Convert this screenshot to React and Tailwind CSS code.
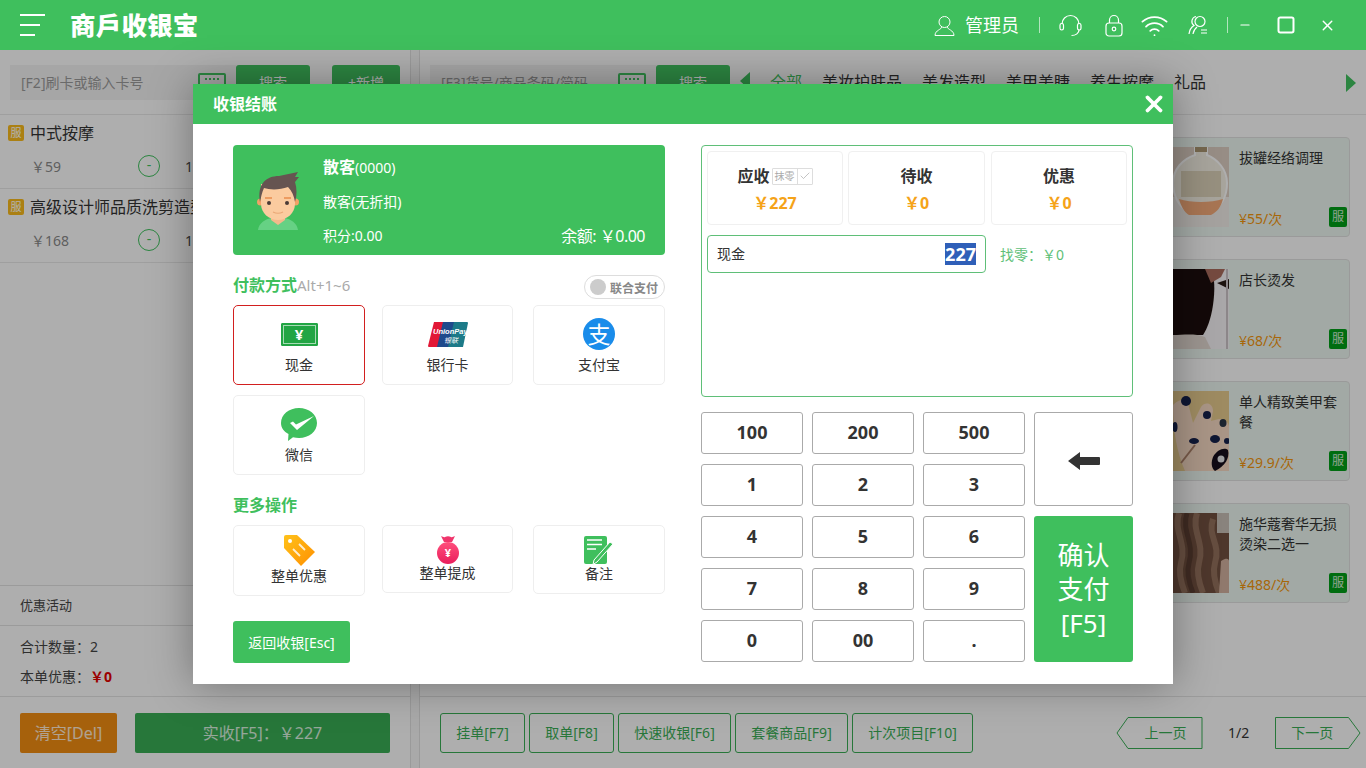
import { Minus, Square, X, Wifi, Check } from 'lucide-react'

const BRAND = 'bg-[#3fbf5d]'

const TABS = ['美妆护肤品', '美发造型', '美甲美睫', '养生按摩', '礼品']
const ORDER_ITEMS = [
  { name: '中式按摩', price: '￥59' },
  { name: '高级设计师品质洗剪造型', price: '￥168' },
]
const GOODS = [
  { name: '拔罐经络调理', price: '¥55/次', photo: 'jar' },
  { name: '店长烫发', price: '¥68/次', photo: 'hair' },
  { name: '单人精致美甲套餐', price: '¥29.9/次', photo: 'nails' },
  { name: '施华蔻奢华无损烫染二选一', price: '¥488/次', photo: 'curls' },
]
const ACTIONS = [
  { label: '挂单[F7]', width: 'w-[85px]' },
  { label: '取单[F8]', width: 'w-[85px]' },
  { label: '快速收银[F6]', width: 'w-[113px]' },
  { label: '套餐商品[F9]', width: 'w-[113px]' },
  { label: '计次项目[F10]', width: 'w-[121px]' },
]
const STATS = [
  { label: '待收', value: '￥0' },
  { label: '优惠', value: '￥0' },
]
const KEYS = ['1', '2', '3', '4', '5', '6', '7', '8', '9', '0', '00', '.']

// photos on the goods cards, only the right part shows beside the dialog
function Photo({ kind }) {
  const blur = `soft-${kind}`
  return (
    <svg width="100" height="80" viewBox="0 0 100 80" className="shrink-0">
      <defs><filter id={blur}><feGaussianBlur stdDeviation="0.7" /></filter></defs>
      <g filter={`url(#${blur})`}>
        {kind === 'jar' && (
          <>
            <rect width="100" height="80" fill="#d8cabf" />
            <rect x="44" y="50" width="56" height="30" fill="#ece9e4" />
            <path d="M66 0h12v8c10 4 20 14 20 28 0 14-6 24-16 28H58c-8-5-14-15-14-28 0-14 10-24 22-28z" fill="#f0ebe0" stroke="#fafafa" strokeWidth="2" />
            <path d="M52 24h40v26H52z" fill="#d9cfb6" />
            <path d="M50 52c12 4 32 4 44 0-2 8-6 13-12 16H60c-5-3-8-9-10-16z" fill="#f1a878" />
            <rect x="66" y="0" width="12" height="5" fill="#a8946f" />
          </>
        )}
        {kind === 'hair' && (
          <>
            <rect width="100" height="80" fill="#f3eff2" />
            <path d="M44 0h38c4 8 4 22 2 36-2 14-6 24-10 30H44z" fill="#1b0f0c" />
            <path d="M44 66c10 0 22-2 32 2l6 12H44z" fill="#e0d6ce" />
            <path d="M76 0h20l-4 8-10 6z" fill="#a86a5c" />
            <path d="M88 14l12-4v10z" fill="#2c1a18" />
            <rect x="97" y="0" width="2" height="80" fill="#c9c1c5" />
          </>
        )}
        {kind === 'nails' && (
          <>
            <rect width="100" height="80" fill="#e3c88c" />
            <path d="M44 14c8-8 14-6 16 2l4 16 8-16c4-6 12-4 12 4l-2 10 8-2c6 0 10 4 10 8v44H56C48 62 44 40 44 14z" fill="#f3d6c0" />
            <ellipse cx="57" cy="10" rx="5" ry="5" fill="#17204a" />
            <ellipse cx="78" cy="24" rx="4" ry="4" fill="#17204a" />
            <ellipse cx="94" cy="32" rx="3.500" ry="4" fill="#2a3644" />
            <ellipse cx="65" cy="50" rx="5" ry="3" fill="#17204a" />
            <ellipse cx="86" cy="48" rx="5" ry="4" fill="#17204a" />
            <ellipse cx="98" cy="50" rx="3" ry="3" fill="#17204a" />
            <ellipse cx="46" cy="36" rx="2.500" ry="5" fill="#17204a" />
            <path d="M84 66c4-8 12-10 15-7 2 8-3 16-13 21-4-3-4-9-2-14z" fill="#120f1a" />
            <circle cx="92" cy="68" r="3.500" fill="#e2e2e6" />
            <path d="M52 72l14-18" stroke="#a97f68" strokeWidth="2" />
          </>
        )}
        {kind === 'curls' && (
          <>
            <rect width="100" height="80" fill="#70503f" />
            <rect x="88" y="0" width="12" height="20" fill="#c4bcb4" />
            <path d="M50 0c-6 18 8 30 2 50-3 10 0 20 4 30M68 0c-6 18 8 30 2 50-3 10 0 20 4 30M84 6c-6 18 8 24 2 44-3 10 0 20 4 30" stroke="#93705c" strokeWidth="6" fill="none" />
            <path d="M58 0c-6 18 8 30 2 50-3 10 0 20 4 30" stroke="#5a3d30" strokeWidth="5" fill="none" />
            <path d="M92 48c6-4 8-2 8 0v32H90z" fill="#cfae9c" />
          </>
        )}
      </g>
    </svg>
  )
}

function KeyboardIcon() {
  return (
    <div className="absolute right-[10px] top-[8px] flex h-[19px] w-[28px] items-start justify-center gap-[2px] rounded-[2px] border-2 border-[#3fbf5d] pt-[3px]">
      <i className="h-[2px] w-[2px] bg-[#3fbf5d]" />
      <i className="h-[2px] w-[2px] bg-[#3fbf5d]" />
      <i className="h-[2px] w-[2px] bg-[#3fbf5d]" />
      <i className="h-[2px] w-[2px] bg-[#3fbf5d]" />
    </div>
  )
}

function Header() {
  return (
    <header className={`flex h-[50px] items-center text-white ${BRAND}`}>
      <div className="ml-[20px] flex w-[25px] flex-col gap-[8px]">
        <i className="h-[2px] w-[25px] bg-white" />
        <i className="h-[2px] w-[20px] bg-white" />
        <i className="h-[2px] w-[15px] bg-white" />
      </div>
      <div className="ml-[25px] text-[25.500px] font-black leading-[30px] tracking-[0.2px]">商戶收银宝</div>
      <div className="ml-auto flex items-center">
        <svg width="21" height="21" viewBox="0 0 21 21" fill="none" stroke="white" strokeWidth="1">
          <circle cx="10.500" cy="7" r="5.500" />
          <path d="M7.500 12c.5 2.500-6.500 3-6.500 8.500h19c0-5.500-7-6-6.500-8.500" />
        </svg>
        <span className="ml-[10px] text-[18px] leading-[26px]">管理员</span>
        <i className="ml-[20px] h-[16px] w-px bg-white/60" />
        <svg width="23" height="23" viewBox="0 0 23 23" fill="none" stroke="white" strokeWidth="1.200" className="ml-[19px]">
          <path d="M3 10a8.500 8.500 0 0 1 17 0" />
          <rect x="1" y="9.500" width="3.500" height="6.500" rx="1.700" />
          <rect x="18.500" y="9.500" width="3.500" height="6.500" rx="1.700" />
          <path d="M20 16c0 3-3 5.500-7.500 5.500" />
        </svg>
        <svg width="18" height="23" viewBox="0 0 18 23" fill="none" stroke="white" strokeWidth="1.200" className="ml-[23px]">
          <rect x="1" y="9" width="16" height="13" rx="3" />
          <path d="M4.500 9V6a4.500 4.500 0 0 1 9 0v3" />
          <circle cx="9" cy="15" r="1.800" />
        </svg>
        <Wifi size={29} strokeWidth={1.500} className="ml-[17px]" />
        <svg width="21" height="21" viewBox="0 0 21 21" fill="none" stroke="white" strokeWidth="1.200" className="ml-[19px]">
          <circle cx="12" cy="6.500" r="5" />
          <path d="M8 1.500a5 5 0 0 0-2 9C3.500 12 1.500 15 1 19" />
          <path d="M9 12c-2 1.500-3.500 4-4 7" />
          <path d="M13 15h6M13 18h6" />
        </svg>
        <i className="ml-[18px] h-[16px] w-px bg-white/60" />
        <Minus size={14} strokeWidth={2} className="ml-[10px]" />
        <Square size={20} strokeWidth={2} absoluteStrokeWidth className="ml-[24px]" />
        <X size={17} strokeWidth={2} className="ml-[23px] mr-[30px]" />
      </div>
    </header>
  )
}

// the cashier page that sits dimmed behind the dialog
function LeftPanel() {
  return (
    <aside className="flex w-[411px] shrink-0 flex-col border-r border-[#ddd] bg-[#fafafa]">
      <div className="flex h-[65px] gap-[22px] border-b border-[#e4e4e4] pl-[10px] pt-[15px]">
        <div className="flex">
          <div className="relative h-[35px] w-[226px] bg-[#eee] pl-[11px] text-[14px] leading-[35px] text-[#999]">
            [F2]刷卡或输入卡号
            <KeyboardIcon />
          </div>
          <button className="h-[35px] w-[74px] rounded-[3px] bg-[#3fbf5d] text-[14px] text-white">搜索</button>
        </div>
        <button className="h-[35px] w-[68px] rounded-[3px] bg-[#3fbf5d] text-[14px] text-white">+新增</button>
      </div>
      {ORDER_ITEMS.map(item => (
        <div key={item.name} className="h-[74px] border-b border-[#e4e4e4] pl-[8px] pt-[10px]">
          <div className="flex h-[16px] items-center whitespace-nowrap">
            <span className="h-[16px] w-[16px] rounded-[2px] bg-[#f5b81c] text-center text-[11px] leading-[16px] text-white">服</span>
            <span className="ml-[6px] text-[16px] leading-[16px] text-[#333]">{item.name}</span>
          </div>
          <div className="mt-[14px] flex h-[22px] items-center text-[14px] text-[#888]">
            <span className="ml-[23px] w-[107px]">{item.price}</span>
            <span className="h-[22px] w-[22px] rounded-full border border-[#3fbf5d] text-center leading-[18px] text-[#3fbf5d]">-</span>
            <span className="ml-[25px] text-[#444]">1</span>
          </div>
        </div>
      ))}
      <div className="mt-auto flex h-[41px] items-center border-y border-[#dedede] pl-[20px] text-[13px] text-[#444]">优惠活动</div>
      <div className="flex h-[71px] flex-col gap-[10px] border-b border-[#e0e0e0] pl-[20px] pt-[11px] text-[14px] leading-[20px] text-[#444]">
        <div>合计数量：2</div>
        <div>本单优惠：<b className="text-[#e00000]">￥0</b></div>
      </div>
      <div className="flex h-[71px] gap-[18px] pl-[20px] pt-[16px]">
        <button className="h-[40px] w-[97px] rounded-[2px] bg-[#ee8c12] text-[16px] text-white/80">清空[Del]</button>
        <button className="h-[40px] w-[255px] rounded-[2px] bg-[#38ab54] text-[16px] text-white/80">实收[F5]：￥227</button>
      </div>
    </aside>
  )
}

function RightPanel() {
  return (
    <main className="ml-[8px] flex min-w-0 flex-1 flex-col border-l border-[#ddd] bg-[#fafafa]">
      <div className="flex h-[65px] border-b border-[#e4e4e4] pl-[10px] pt-[15px]">
        <div className="relative h-[35px] w-[226px] bg-[#eee] pl-[11px] text-[14px] leading-[35px] text-[#999]">
          [F3]货号/商品条码/简码
          <KeyboardIcon />
        </div>
        <button className="h-[35px] w-[74px] rounded-[3px] bg-[#3fbf5d] text-[14px] text-white">搜索</button>
        <svg width="10" height="18" viewBox="0 0 10 18" className="ml-[10px] mt-[7px]"><path d="M10 0v18L0 9z" fill="#3fbf5d" /></svg>
        <div className="ml-[20px] flex gap-[20px] text-[16px] leading-[35px] text-[#333]">
          <span className="text-[#3fbf5d]">全部</span>
          {TABS.map(t => <span key={t}>{t}</span>)}
        </div>
        <svg width="10" height="18" viewBox="0 0 10 18" className="ml-auto mr-[10px] mt-[9px]"><path d="M0 0v18l10-9z" fill="#3fbf5d" /></svg>
      </div>
      <div className="flex flex-1 flex-col items-end gap-[22px] pr-[16px] pt-[22px]">
        {GOODS.map(g => (
          <div key={g.name} className="flex h-[100px] w-[230px] items-center rounded-[4px] border border-[#ddd] bg-[#e8f3ec] pl-[8px]">
            <Photo kind={g.photo} />
            <div className="relative flex h-[80px] flex-1 flex-col justify-between pl-[10px] pr-[6px] pt-px">
              <div className="text-[14px] leading-[20px] text-[#333]">{g.name}</div>
              <div className="-mb-[2px] text-[14px] leading-[20px] text-[#f0940f]">{g.price}</div>
              <span className="absolute bottom-0 right-[2px] h-[20px] w-[18px] rounded-[2px] bg-[#009c17] text-center text-[12px] leading-[20px] text-white/80">服</span>
            </div>
          </div>
        ))}
      </div>
      <div className="flex h-[72px] items-center border-t border-[#e0e0e0] pl-[20px]">
        <div className="flex gap-[4px]">
          {ACTIONS.map(a => (
            <button key={a.label} className={`h-[40px] rounded-[3px] border border-[#38ab54] text-[14px] text-[#38ab54] ${a.width}`}>{a.label}</button>
          ))}
        </div>
        <div className="relative ml-[143px] flex h-[32px] w-[87px] items-center justify-center pl-[12px] text-[14px] text-[#38ab54]">
          <svg width="87" height="32" viewBox="0 0 87 32" fill="none" className="absolute inset-0"><path d="M12 .5h74v31H12L1 16z" stroke="#38ab54" /></svg>
          上一页
        </div>
        <span className="ml-[25px] text-[14px] text-[#333]">1/2</span>
        <div className="relative ml-[26px] flex h-[32px] w-[86px] items-center justify-center pr-[12px] text-[14px] text-[#38ab54]">
          <svg width="86" height="32" viewBox="0 0 86 32" fill="none" className="absolute inset-0"><path d="M.5.5h73L85 16 73.500 31.500H.5z" stroke="#38ab54" /></svg>
          下一页
        </div>
      </div>
    </main>
  )
}

function Avatar() {
  return (
    <svg width="42" height="58" viewBox="0 0 42 58" className="shrink-0">
      <path d="M1 58c1-7 7-11 14-12l6 3 6-3c7 1 13 5 14 12z" fill="#66d184" />
      <path d="M14 42h14v6l-7 5-7-5z" fill="#f3b98b" />
      <circle cx="3.500" cy="30" r="3.500" fill="#f2a267" />
      <circle cx="38.500" cy="30" r="3.500" fill="#f2a267" />
      <path d="M4 12h34v20c0 9-8 16-17 16S4 41 4 32z" fill="#fbcb9f" />
      <path d="M3 30C0 12 9 4 22 4L41 0l-3 5 4 0-4 5c2 6 2 14 0 20-1-6-3-11-7-15-8 3-18 3-24 1-2 4-3 9-4 14z" fill="#665451" />
      <circle cx="12" cy="31" r="2" fill="#4a3a36" />
      <circle cx="30" cy="31" r="2" fill="#4a3a36" />
      <path d="M8 26h7M27 26h7" stroke="#e98d4d" strokeWidth="1.300" />
      <path d="M16 40c3 1.500 7 1.500 10 0" stroke="#e9a777" strokeWidth="1.200" fill="none" />
    </svg>
  )
}

function CashIcon() {
  return (
    <div className="flex h-[23px] w-[37px] items-center justify-center rounded-[1px] border border-[#22a544] bg-[#22a544] text-[15px] font-bold leading-none text-white outline outline-1 -outline-offset-[3px] outline-white/60">¥</div>
  )
}

function UnionPayIcon() {
  return (
    <svg width="40" height="25" viewBox="0 0 40 25">
      <path d="M6 0h12l-6 25H1a1 1 0 0 1-1-1z" fill="#e21836" />
      <path d="M15 0h14l-6 25H9z" fill="#1f4a8c" />
      <path d="M26 0h13a1 1 0 0 1 1 1l-5 24H20z" fill="#1c7a88" />
      <text x="5" y="12" fontSize="7.500" fontWeight="700" fontStyle="italic" fill="white" fontFamily="Liberation Sans">UnionPay</text>
      <text x="16" y="21" fontSize="7" fontStyle="italic" fill="white">银联</text>
    </svg>
  )
}

function AlipayIcon() {
  return (
    <div className="flex h-[32px] w-[32px] items-center justify-center rounded-full bg-[#1a8cea] text-[23px] leading-none text-white">支</div>
  )
}

function WechatIcon() {
  return (
    <svg width="36" height="33" viewBox="0 0 36 33">
      <path d="M18 0c10 0 18 6.500 18 15S28 30 18 30c-2 0-4-.3-6-.8L7 33l.5-7C3 23.500 0 20 0 15 0 6.500 8 0 18 0z" fill="#3fbf5d" />
      <path d="M9 15l3-1.500 3 3L33 8 16 22z" fill="white" />
    </svg>
  )
}

function TagIcon() {
  return (
    <svg width="31" height="31" viewBox="0 0 31 31">
      <defs><linearGradient id="tag" x1="0" y1="0" x2="1" y2="1"><stop offset="0" stopColor="#ffc21a" /><stop offset="1" stopColor="#ff8f00" /></linearGradient></defs>
      <path d="M2 0h11l18 17-14 14L0 13V2a2 2 0 0 1 2-2z" fill="url(#tag)" />
      <circle cx="6" cy="6" r="2" fill="white" />
      <path d="M9 15l6-6M14 21l7-7" stroke="white" strokeWidth="1.800" opacity=".8" transform="rotate(90 15 15)" />
    </svg>
  )
}

function BagIcon() {
  return (
    <svg width="22" height="28" viewBox="0 0 22 28">
      <defs><linearGradient id="bag" x1="0" y1="0" x2="0" y2="1"><stop offset="0" stopColor="#ff4f7c" /><stop offset="1" stopColor="#e91e5c" /></linearGradient></defs>
      <path d="M4 0c2 1 3 1.500 4 1 2-1 4-1 6 0 1 .5 2 0 4-1l-3 6H7z" fill="#f0356c" />
      <circle cx="11" cy="17" r="11" fill="url(#bag)" />
      <text x="11" y="21" fontSize="11" fontWeight="700" fill="white" textAnchor="middle">¥</text>
    </svg>
  )
}

function NoteIcon() {
  return (
    <svg width="30" height="29" viewBox="0 0 30 29">
      <rect width="23" height="28" rx="2" fill="#3fbf5d" />
      <path d="M3 4h15M3 8.500h15M3 13h9" stroke="white" strokeWidth="1.500" />
      <path d="M29 8L13 26l-4 2.500 1-4.500L26 6z" fill="#3fbf5d" stroke="white" strokeWidth="1" />
    </svg>
  )
}

function PayTile({ icon, label, active, width = 'w-[132px]', height = 'h-[80px]', top = 'pt-[12px]', gap = 'mt-[5px]' }) {
  return (
    <button className={`flex flex-col items-center rounded-[5px] border bg-white ${width} ${height} ${top} ${active ? 'border-[#d21f1f]' : 'border-[#eee]'}`}>
      <span className="flex h-[32px] items-center">{icon}</span>
      <span className={`text-[14px] leading-[20px] text-[#333] ${gap}`}>{label}</span>
    </button>
  )
}

function Key({ label }) {
  return <button className="rounded-[3px] border border-[#aaa] bg-white pb-[2px] text-[18px] font-bold text-[#333]">{label}</button>
}

function CheckoutDialog() {
  return (
    <div className="absolute inset-x-0 bottom-0 top-[50px] flex justify-center bg-black/30 pt-[34px]">
      <div className="h-[600px] w-[980px] bg-white shadow-[0_0_40px_rgba(0,0,0,0.35)]">
        <div className={`flex h-[40px] items-center justify-between pl-[20px] pr-[6px] text-white ${BRAND}`}>
          <span className="text-[16px] font-bold">收银结账</span>
          <X size={26} strokeWidth={3.500} />
        </div>
        <div className="flex gap-[36px] px-[40px] pt-[21px]">
          {/* left: customer, pay methods */}
          <div className="w-[432px]">
            <div className={`flex h-[110px] rounded-[4px] pl-[24px] text-white ${BRAND}`}>
              <div className="pt-[27px]"><Avatar /></div>
              <div className="ml-[24px] flex flex-1 flex-col pr-[20px] pt-[10px]">
                <div className="text-[14px] leading-[24px]"><b className="text-[16px]">散客</b>(0000)</div>
                <div className="mt-[10px] text-[14px] leading-[24px]">散客(无折扣)</div>
                <div className="mt-[10px] flex items-center justify-between leading-[24px]">
                  <span className="text-[14px]">积分:0.00</span>
                  <span className="text-[16px] tracking-[-0.5px]">余额: ￥0.00</span>
                </div>
              </div>
            </div>
            <div className="mt-[20px] flex h-[24px] items-start justify-between">
              <div className="text-[15px] leading-[20px] text-[#aaa]"><b className="text-[16px] text-[#3fbf5d]">付款方式</b>Alt+1~6</div>
              <div className="flex h-[24px] w-[81px] items-center rounded-full border border-[#ddd] pl-[5px]">
                <i className="h-[16px] w-[16px] rounded-full bg-[#ccc]" />
                <span className="ml-[4px] mt-[3px] text-[12px] font-bold leading-[16px] text-[#888]">联合支付</span>
              </div>
            </div>
            <div className="mt-[6px] grid grid-cols-[149px_151px_132px] gap-y-[10px]">
              <PayTile active icon={<CashIcon />} label="现金" />
              <PayTile icon={<UnionPayIcon />} label="银行卡" width="w-[131px]" />
              <PayTile icon={<AlipayIcon />} label="支付宝" />
              <PayTile icon={<WechatIcon />} label="微信" />
            </div>
            <div className="mt-[18px] text-[16px] font-bold leading-[24px] text-[#3fbf5d]">更多操作</div>
            <div className="mt-[8px] grid grid-cols-[149px_151px_132px] items-start">
              <PayTile icon={<TagIcon />} label="整单优惠" height="h-[71px]" top="pt-[8px]" gap="mt-0" />
              <PayTile icon={<BagIcon />} label="整单提成" width="w-[131px]" height="h-[68px]" top="pt-[8px]" gap="-mt-[3px]" />
              <PayTile icon={<NoteIcon />} label="备注" height="h-[69px]" top="pt-[8px]" gap="-mt-[2px]" />
            </div>
            <button className={`mt-[25px] h-[42px] w-[117px] rounded-[3px] text-[14px] text-white ${BRAND}`}>返回收银[Esc]</button>
          </div>

          {/* right: amounts and keypad */}
          <div className="w-[432px]">
            <div className="h-[252px] rounded-[4px] border border-[#5fbf78] px-[5px] pt-[5px]">
              <div className="flex gap-[5px]">
                <div className="flex h-[74px] w-[136px] flex-col items-center rounded-[4px] border border-[#f0f0f0] pt-[11px]">
                  <div className="flex h-[26px] items-center gap-[2px]">
                    <span className="text-[16px] font-bold text-[#333]">应收</span>
                    <span className="flex h-[17px] items-center rounded-[1px] border border-[#ddd] text-[10px] leading-none text-[#aaa]">
                      <span className="border-r border-[#ddd] px-[2px] leading-[15px]">抹零</span>
                      <Check size={12} strokeWidth={1} className="mx-px text-[#888]" />
                    </span>
                  </div>
                  <b className="mt-px text-[16px] leading-[26px] text-[#f5a319]">￥227</b>
                </div>
                {STATS.map(s => (
                  <div key={s.label} className="flex h-[74px] w-[137px] flex-col items-center rounded-[4px] border border-[#f0f0f0] pt-[11px] last:ml-px last:w-[136px]">
                    <span className="text-[16px] font-bold leading-[26px] text-[#333]">{s.label}</span>
                    <b className="mt-px text-[16px] leading-[26px] text-[#f5a319]">{s.value}</b>
                  </div>
                ))}
              </div>
              <div className="mt-[10px] flex items-center">
                <div className="flex h-[38px] w-[279px] items-center justify-between rounded-[4px] border border-[#5fbf78] px-[9px] text-[14px] leading-[20px] text-[#333]">
                  <span>现金</span>
                  <b className="bg-[#2f5fb8] text-[18px] leading-[22px] text-white">227</b>
                </div>
                <span className="ml-[14px] text-[14px] text-[#5fbf78]">找零：￥0</span>
              </div>
            </div>
            <div className="mt-[15px] grid grid-cols-[102px_102px_102px_99px] grid-rows-[42px_42px_42px_42px_42px] gap-x-[9px] gap-y-[10px]">
              {['100', '200', '500'].map(k => <Key key={k} label={k} />)}
              <button className="row-span-2 flex items-center justify-center rounded-[3px] border border-[#aaa] bg-white pt-[3px]">
                <svg width="32" height="18" viewBox="0 0 32 18"><path d="M12 0v5h19a1 1 0 0 1 1 1v6a1 1 0 0 1-1 1H12v5L0 9z" fill="#333" /></svg>
              </button>
              {KEYS.slice(0, 3).map(k => <Key key={k} label={k} />)}
              {KEYS.slice(3, 6).map(k => <Key key={k} label={k} />)}
              <button className={`row-span-3 rounded-[3px] text-[26px] leading-[34px] text-white ${BRAND}`}>确认<br />支付<br />[F5]</button>
              {KEYS.slice(6).map(k => <Key key={k} label={k} />)}
            </div>
          </div>
        </div>
      </div>
    </div>
  )
}

export default function App() {
  return (
    <div className="relative flex h-[768px] w-[1366px] flex-col overflow-hidden bg-[#f2f2f2] font-['Noto_Sans','Noto_Sans_CJK_SC',sans-serif]">
      <Header />
      <div className="flex flex-1">
        <LeftPanel />
        <RightPanel />
      </div>
      <CheckoutDialog />
    </div>
  )
}
